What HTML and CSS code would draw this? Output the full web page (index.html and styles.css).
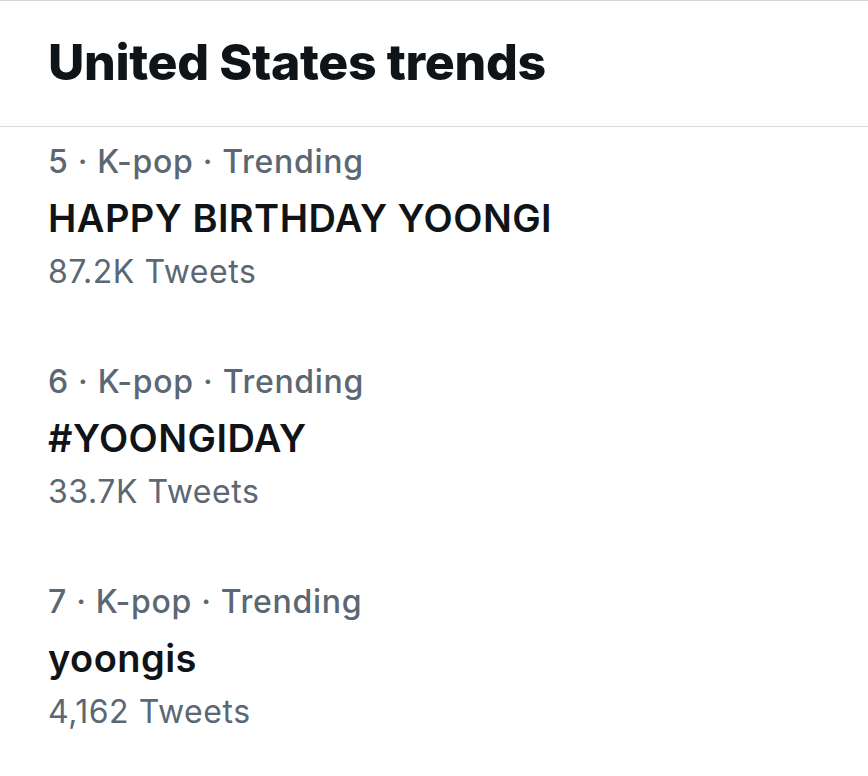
FILE: index.html
```html
<!DOCTYPE html>
<html lang="en">
<head>
<meta charset="utf-8">
<title>United States trends</title>
<link rel="stylesheet" href="styles.css">
</head>
<body>
<div class="panel">
  <header class="header">
    <h1 class="title">United States trends</h1>
  </header>
  <ul class="trends">
    <li class="trend">
      <div class="meta">5 · K-pop · Trending</div>
      <div class="name">HAPPY BIRTHDAY YOONGI</div>
      <div class="count">87.2K Tweets</div>
    </li>
    <li class="trend">
      <div class="meta">6 · K-pop · Trending</div>
      <div class="name">#YOONGIDAY</div>
      <div class="count">33.7K Tweets</div>
    </li>
    <li class="trend">
      <div class="meta">7 · K-pop · Trending</div>
      <div class="name">yoongis</div>
      <div class="count">4,162 Tweets</div>
    </li>
  </ul>
</div>
</body>
</html>
```

FILE: styles.css
```css
* { box-sizing: border-box; }
html, body {
  margin: 0;
  padding: 0;
  background: #ffffff;
}
body {
  font-family: Inter, "Noto Sans", "Liberation Sans", sans-serif;
  color: #14171a;
}
.panel {
  width: 868px;
  height: 776px;
  overflow: hidden;
}
.header {
  border-top: 1px solid #d3d6d8;
  border-bottom: 1px solid #d8dadc;
  padding: 31px 48px 34px;
}
.title {
  margin: 0;
  font-size: 50px;
  line-height: 60px;
  font-weight: 800;
  color: #0f1419;
  letter-spacing: -0.35px;
}
.trends {
  list-style: none;
  margin: 0;
  padding: 0;
}
.trend {
  height: 220px;
  padding: 16px 48px 0;
  display: flex;
  flex-direction: column;
}
.meta {
  font-size: 32px;
  line-height: 38px;
  font-weight: 500;
  color: #5b6772;
  letter-spacing: 0.7px;
}
.name {
  margin-top: 12px;
  font-size: 38px;
  line-height: 50px;
  font-weight: 600;
  color: #111417;
  letter-spacing: 0.45px;
}
.count {
  margin-top: 10px;
  font-size: 32px;
  line-height: 38px;
  font-weight: 400;
  color: #5b6772;
  letter-spacing: 0.55px;
}
```
